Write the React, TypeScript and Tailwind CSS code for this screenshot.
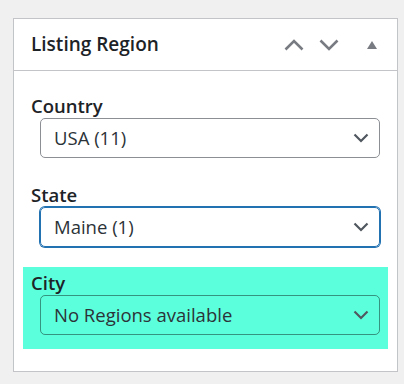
import React from 'react';

const font = { fontFamily: '"Open Sans", "Noto Sans", sans-serif' };

const SelectChevron: React.FC = () => (
  <svg width="16" height="10" viewBox="0 0 16 10" className="absolute right-[10px] top-1/2 -translate-y-1/2">
    <path d="M1.5 1.5 L8 8 L14.5 1.5" fill="none" stroke="#50575e" strokeWidth="2.2" />
  </svg>
);

interface FieldProps {
  label: string;
  value: string;
  focused?: boolean;
  onColor?: boolean;
}

const Field: React.FC<FieldProps> = ({ label, value, focused, onColor }) => {
  let border = 'border border-[#8c8f94]';
  if (focused) border = 'border border-[#2271b1] ring-1 ring-[#2271b1]';
  if (onColor) border = 'border border-[rgba(0,0,0,0.42)]';
  return (
    <div>
      <div className="pl-[8px] text-[18.5px] leading-[24px] font-semibold text-[#1d2327]">{label}</div>
      <div
        className={`relative ml-[17px] w-[340px] h-[40px] rounded-[5px] flex items-center pl-[13px] text-[18.5px] text-[#2c3338] ${border}`}
      >
        {value}
        <SelectChevron />
      </div>
    </div>
  );
};

export default function App() {
  return (
    <div className="w-[404px] h-[384px] bg-[#f0f0f1] pt-[18px] pl-[13px]" style={font}>
      <div className="w-[385px] h-[354px] border border-[#c3c4c7] bg-white">
        <div className="h-[52px] border-b border-[#c3c4c7] flex items-center pl-[17px] pr-[20px]">
          <h2 className="flex-1 text-[19px] font-semibold text-[#1d2327]">Listing Region</h2>
          <div className="flex items-center">
            <svg width="20" height="12" viewBox="0 0 20 12">
              <path d="M1.5 10.5 L10 2 L18.5 10.5" fill="none" stroke="#787c82" strokeWidth="2.6" />
            </svg>
            <svg width="20" height="12" viewBox="0 0 20 12" className="ml-[15px]">
              <path d="M1.5 1.5 L10 10 L18.5 1.5" fill="none" stroke="#787c82" strokeWidth="2.6" />
            </svg>
            <svg width="10" height="8" viewBox="0 0 10 8" className="ml-[28px]">
              <path d="M5 0 L10 8 L0 8 Z" fill="#787c82" />
            </svg>
          </div>
        </div>
        <div className="pt-[23px] pl-[9px]">
          <Field label="Country" value="USA (11)" />
          <div className="mt-[25px]">
            <Field label="State" value="Maine (1)" focused />
          </div>
          <div className="mt-[20px] w-[365px] bg-[#5cffdc] pt-[4px] pb-[14px]">
            <Field label="City" value="No Regions available" onColor />
          </div>
        </div>
      </div>
    </div>
  );
}
